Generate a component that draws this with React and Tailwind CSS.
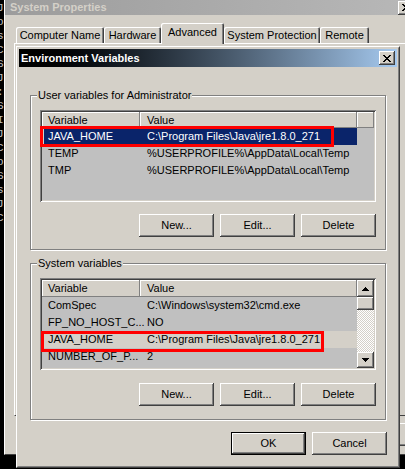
const raised = 'shadow-[inset_-1px_-1px_0_#404040,inset_1px_1px_0_#ffffff,inset_-2px_-2px_0_#808080,inset_2px_2px_0_#d4d0c8]'
const sunken = 'shadow-[inset_1px_1px_0_#808080,inset_-1px_-1px_0_#ffffff,inset_2px_2px_0_#404040,inset_-2px_-2px_0_#d4d0c8]'
const headCell = 'h-full flex items-center bg-[#d4d0c8] shadow-[inset_-1px_-1px_0_#808080,inset_1px_1px_0_#ffffff]'

const userVars = [
  { name: 'JAVA_HOME', value: 'C:\\Program Files\\Java\\jre1.8.0_271', selected: true },
  { name: 'TEMP', value: '%USERPROFILE%\\AppData\\Local\\Temp' },
  { name: 'TMP', value: '%USERPROFILE%\\AppData\\Local\\Temp' },
]

const systemVars = [
  { name: 'ComSpec', value: 'C:\\Windows\\system32\\cmd.exe' },
  { name: 'FP_NO_HOST_C...', value: 'NO' },
  { name: 'JAVA_HOME', value: 'C:\\Program Files\\Java\\jre1.8.0_271', dim: true },
  { name: 'NUMBER_OF_P...', value: '2' },
  { name: 'OS', value: 'Windows_NT' },
]

const tabs = [
  { label: 'Computer Name', w: 'w-[88px]' },
  { label: 'Hardware', w: 'w-[57px]' },
  { label: 'Advanced', w: 'w-[63px]', active: true },
  { label: 'System Protection', w: 'w-[96px]' },
  { label: 'Remote', w: 'w-[49px]' },
]

const xPixels = [[0, 0, 2], [6, 0, 2], [1, 1, 2], [5, 1, 2], [2, 2, 4], [3, 3, 2], [2, 4, 4], [1, 5, 2], [5, 5, 2], [0, 6, 2], [6, 6, 2]]

function CloseGlyph() {
  return (
    <svg width="8" height="7" viewBox="0 0 8 7" shapeRendering="crispEdges">
      {xPixels.map(([x, y, w]) => <rect key={`${x}-${y}`} x={x} y={y} width={w} height="1" fill="#000" />)}
    </svg>
  )
}

function CaptionButton() {
  return (
    <div className={`w-[16px] h-[14px] flex items-center justify-center bg-[#d4d0c8] ${raised}`}>
      <CloseGlyph />
    </div>
  )
}

function Btn({ children, isDefault }) {
  if (isDefault) {
    return (
      <button type="button" className="w-[75px] h-[23px] border border-black bg-[#d4d0c8]">
        <span className={`w-full h-full flex items-center justify-center ${raised}`}>{children}</span>
      </button>
    )
  }
  return (
    <button type="button" className={`w-[75px] h-[23px] flex items-center justify-center bg-[#d4d0c8] ${raised}`}>
      {children}
    </button>
  )
}

function Group({ label, children, bottom }) {
  return (
    <div className={`relative mx-[11px] border border-[#808080] shadow-[inset_1px_1px_0_#ffffff,1px_1px_0_#ffffff] px-[9px] pt-[14px] ${bottom}`}>
      <span className="absolute -top-[7px] left-[6px] bg-[#d4d0c8] px-[1px] leading-[13px]">{label}</span>
      {children}
    </div>
  )
}

function Header({ h }) {
  return (
    <div className={`flex ${h}`}>
      <div className={`${headCell} w-[98px] pl-[6px]`}>Variable</div>
      <div className={`${headCell} w-[217px] pl-[7px]`}>Value</div>
    </div>
  )
}

function Row({ item }) {
  const tone = item.selected
    ? 'bg-[#0a246a] text-white shadow-[inset_2px_0_0_#d4d0c8]'
    : item.dim ? 'bg-[#d4d0c8]' : ''
  return (
    <div className={`flex h-[17px] items-center w-[315px] whitespace-nowrap ${tone}`}>
      <span className="w-[98px] pl-[6px]">{item.name}</span>
      <span className="pl-[7px]">{item.value}</span>
    </div>
  )
}

function Arrow({ down }) {
  return (
    <svg width="7" height="4" viewBox="0 0 7 4" shapeRendering="crispEdges">
      <path
        d={down ? 'M0 0h7v1h-1v1h-1v1h-1v1h-1V3H2V2H1V1H0z' : 'M3 0h1v1h1v1h1v1h1v1H0V3h1V2h1V1h1z'}
        fill="#000"
      />
    </svg>
  )
}

function Scrollbar() {
  return (
    <div className="w-[17px] h-full flex flex-col">
      <div className={`h-[17px] flex items-center justify-center bg-[#d4d0c8] ${raised}`}><Arrow /></div>
      <div className={`h-[13px] bg-[#d4d0c8] ${raised}`} />
      <div className="flex-1 bg-[repeating-conic-gradient(#d4d0c8_0_25%,#ffffff_0_50%)] bg-[length:2px_2px]" />
      <div className={`h-[16px] flex items-center justify-center bg-[#d4d0c8] ${raised}`}><Arrow down /></div>
    </div>
  )
}

function Tab({ tab }) {
  const base = 'flex items-center justify-center rounded-t-[2px] bg-[#d4d0c8] shadow-[inset_1px_1px_0_#ffffff,inset_-1px_0_0_#404040,inset_-2px_0_0_#808080]'
  return tab.active
    ? <div className={`${base} ${tab.w} h-[21px] pb-[2px] -mb-[1px] relative z-10`}>{tab.label}</div>
    : <div className={`${base} ${tab.w} h-[16px] pt-[1px]`}>{tab.label}</div>
}

const consoleChars = ['J', 'o', 's', 'C', 'S', 'J', ':', 'S', 'I', 'J', 'C', 'o', 'S', 's', 'J', 'C']

function SystemProperties() {
  return (
    <div className="absolute left-[4px] top-0 w-[412px] h-[455px] bg-[#d4d0c8] border-l border-l-white border-b border-b-[#404040] flex flex-col">
      <div className="h-[15px] flex items-center pl-[5px] pr-[2px] bg-gradient-to-r from-[#9c9c9c] to-[#b8b8b8]">
        <span className="font-bold text-[#d4d0c8]">System Properties</span>
        <div className="ml-auto"><CaptionButton /></div>
      </div>
      <div className="mt-[9px] ml-[11px] flex items-end h-[19px]">
        {tabs.map(t => <Tab key={t.label} tab={t} />)}
      </div>
      <div className="ml-[9px] mr-[4px] h-[373px] border-t border-l border-t-white border-l-white border-b border-b-[#404040] border-r border-r-[#404040]" />
      <div className="mt-[7px] flex justify-end pr-[6px]">
        <Btn>Apply</Btn>
      </div>
    </div>
  )
}

function EnvironmentVariables() {
  return (
    <div className="absolute left-[16px] top-[46px] w-[384px] h-[422px] border border-t-white border-l-white border-r-[#404040] border-b-[#404040]">
      <div className="h-full border border-t-[#d4d0c8] border-l-[#d4d0c8] border-r-[#808080] border-b-[#808080] bg-[#d4d0c8] p-[1px] flex flex-col">
        <div className="h-[18px] flex items-center pl-[2px] pr-[2px] bg-gradient-to-r from-[#000000] to-[#a6caf0]">
          <span className="font-bold text-white">Environment Variables</span>
          <div className="ml-auto"><CaptionButton /></div>
        </div>

        <div className="mt-[28px]">
          <Group label="User variables for Administrator" bottom="pb-[12px]">
            <div className={`relative w-[336px] h-[92px] p-[2px] bg-[#c0c0c0] ${sunken}`}>
              <div className="h-full overflow-hidden">
                <div className="flex h-[16px]">
                  <div className={`${headCell} w-[98px] pl-[6px]`}>Variable</div>
                  <div className={`${headCell} w-[217px] pl-[7px]`}>Value</div>
                  <div className={`${headCell} flex-1`} />
                </div>
                {userVars.map(v => <Row key={v.name} item={v} />)}
              </div>
              <div className="absolute left-0 top-[16px] w-[294px] h-[21px] border-[3px] border-[#ff0000]" />
            </div>
            <div className="mt-[12px] flex justify-end gap-[6px]">
              <Btn>New...</Btn>
              <Btn>Edit...</Btn>
              <Btn>Delete</Btn>
            </div>
          </Group>
        </div>

        <div className="mt-[13px]">
          <Group label="System variables" bottom="pb-[13px]">
            <div className={`relative w-[336px] h-[92px] p-[2px] bg-[#c0c0c0] flex ${sunken}`}>
              <div className="w-[315px] h-full overflow-hidden">
                <Header h="h-[17px]" />
                {systemVars.map(v => <Row key={v.name} item={v} />)}
              </div>
              <Scrollbar />
              <div className="absolute left-[1px] top-[53px] w-[283px] h-[21px] border-[3px] border-[#ff0000]" />
            </div>
            <div className="mt-[13px] flex justify-end gap-[6px]">
              <Btn>New...</Btn>
              <Btn>Edit...</Btn>
              <Btn>Delete</Btn>
            </div>
          </Group>
        </div>

        <div className="mt-[12px] flex justify-end gap-[6px] pr-[10px]">
          <Btn isDefault>OK</Btn>
          <Btn>Cancel</Btn>
        </div>
      </div>
    </div>
  )
}

export default function App() {
  return (
    <div className="relative w-[405px] h-[469px] overflow-hidden bg-black text-black text-[11px] leading-[13px] font-['Liberation_Sans',Arial,sans-serif]">
      <div className="absolute left-0 top-0 w-[4px] h-full overflow-hidden pt-[2px]">
        {consoleChars.map((c, i) => (
          <div key={i} className="h-[14px] -ml-[3px] font-['Liberation_Mono',monospace] text-[#c0c0c0]">{c}</div>
        ))}
      </div>
      <SystemProperties />
      <EnvironmentVariables />
    </div>
  )
}
